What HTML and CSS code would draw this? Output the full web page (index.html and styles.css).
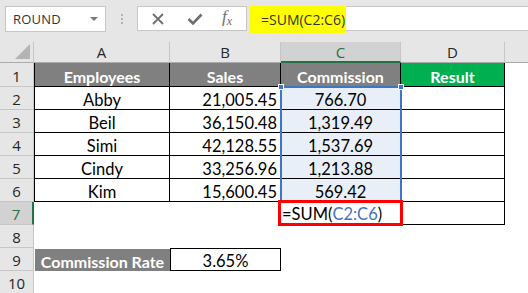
FILE: index.html
```html
<!DOCTYPE html>
<html>
<head>
<meta charset="utf-8">
<link rel="stylesheet" href="styles.css">
</head>
<body>
<div class="app">
  <div class="toolbar">
    <div class="namebox">
      <span class="name">ROUND</span>
      <span class="caret"></span>
    </div>
    <div class="grip"><i></i><i></i><i></i></div>
    <div class="fxbox">
      <svg class="ico" width="14" height="14" viewBox="0 0 14 14"><path d="M2 2 L12 12 M12 2 L2 12" stroke="#6e6e6e" stroke-width="1.8" fill="none"/></svg>
      <svg class="ico" width="16" height="14" viewBox="0 0 16 14"><path d="M1.5 7 L6 11.5 L14.5 2.5" stroke="#6e6e6e" stroke-width="2.6" fill="none"/></svg>
      <span class="fx">f<sub>x</sub></span>
    </div>
    <div class="formula">
      <span class="hl">=SUM(C2:C6)</span>
    </div>
  </div>
  <div class="sheet">
    <div class="corner"><span class="tri"></span></div>
    <div class="ch">A</div>
    <div class="ch">B</div>
    <div class="ch sel">C</div>
    <div class="ch">D</div>
    <div class="ch last"></div>

    <div class="rh">1</div>
    <div class="c hd bl">Employees</div>
    <div class="c hd">Sales</div>
    <div class="c hd">Commission</div>
    <div class="c hd green">Result</div>
    <div class="c"></div>

    <div class="rh">2</div>
    <div class="c t bl">Abby</div>
    <div class="c t r">21,005.45</div>
    <div class="c t blue">766.70</div>
    <div class="c t"></div>
    <div class="c"></div>

    <div class="rh">3</div>
    <div class="c t bl">Beil</div>
    <div class="c t r">36,150.48</div>
    <div class="c t blue">1,319.49</div>
    <div class="c t"></div>
    <div class="c"></div>

    <div class="rh">4</div>
    <div class="c t bl">Simi</div>
    <div class="c t r">42,128.55</div>
    <div class="c t blue">1,537.69</div>
    <div class="c t"></div>
    <div class="c"></div>

    <div class="rh">5</div>
    <div class="c t bl">Cindy</div>
    <div class="c t r">33,256.96</div>
    <div class="c t blue">1,213.88</div>
    <div class="c t"></div>
    <div class="c"></div>

    <div class="rh">6</div>
    <div class="c t bl">Kim</div>
    <div class="c t r">15,600.45</div>
    <div class="c t blue">569.42</div>
    <div class="c t"></div>
    <div class="c"></div>

    <div class="rh act">7</div>
    <div class="c"></div>
    <div class="c"></div>
    <div class="c"></div>
    <div class="c t"></div>
    <div class="c"></div>

    <div class="rh">8</div>
    <div class="c"></div>
    <div class="c"></div>
    <div class="c"></div>
    <div class="c"></div>
    <div class="c"></div>

    <div class="rh">9</div>
    <div class="c rate">Commission Rate</div>
    <div class="c box">3.65%</div>
    <div class="c"></div>
    <div class="c"></div>
    <div class="c"></div>

    <div class="rh">10</div>
    <div class="c"></div>
    <div class="c"></div>
    <div class="c"></div>
    <div class="c"></div>
    <div class="c"></div>

    <div class="selection">
      <span class="handle hl-l"></span>
      <span class="handle hl-r"></span>
    </div>
    <div class="editing">=SUM(<span class="ref">C2:C6</span>)</div>
  </div>
</div>
</body>
</html>
```

FILE: styles.css
```css
* { box-sizing: border-box; }
html, body { margin: 0; padding: 0; }
body {
  width: 528px;
  height: 293px;
  overflow: hidden;
  background: #e6e6e6;
  font-family: "Open Sans", "Noto Sans", sans-serif;
}
.app { width: 528px; height: 293px; overflow: hidden; }

.toolbar {
  height: 42px;
  display: flex;
  align-items: flex-start;
  padding-top: 6px;
  padding-left: 5px;
  background: #e6e6e6;
}
.namebox {
  width: 101px;
  height: 26px;
  background: #fff;
  border: 1px solid #c6c6c6;
  display: flex;
  align-items: center;
  padding-left: 7px;
  position: relative;
}
.name {
  font-size: 13px;
  color: #333;
  letter-spacing: 0.2px;
}
.caret {
  position: absolute;
  right: 7px;
  top: 10px;
  width: 0; height: 0;
  border-left: 4px solid transparent;
  border-right: 4px solid transparent;
  border-top: 4px solid #7a7a7a;
}
.grip {
  width: 31px;
  height: 26px;
  display: flex;
  flex-direction: column;
  align-items: center;
  justify-content: center;
  gap: 2px;
}
.grip i {
  display: block;
  width: 2px; height: 2px;
  background: #b4b4b4;
}
.fxbox {
  width: 110px;
  height: 25px;
  background: #fff;
  border: 1px solid #c6c6c6;
  display: flex;
  align-items: center;
  padding-left: 13px;
}
.ico { display: block; }
.fxbox .ico:first-child { margin-right: 22px; }
.fxbox .ico:nth-child(2) { margin-right: 19px; }
.fx {
  font-family: "Liberation Serif", serif;
  font-style: italic;
  font-size: 17px;
  color: #6e6e6e;
  line-height: 1;
  margin-top: -3px;
}
.fx sub { font-size: 12px; vertical-align: -3px; }
.formula {
  margin-left: 3px;
  flex: 1;
  height: 25px;
  background: #fff;
  border: 1px solid #c6c6c6;
  border-right: none;
  position: relative;
}
.hl {
  position: absolute;
  left: -1px;
  top: -1px;
  width: 96px;
  height: 27px;
  background: #ffff00;
  font-size: 14px;
  color: #333;
  padding-left: 11px;
  display: flex;
  align-items: center;
}

.sheet {
  position: relative;
  display: grid;
  grid-template-columns: 34px 136px 111px 120px 104px 1fr;
  grid-template-rows: 21px 24px repeat(9, 23px);
  background: #fff;
}
.corner {
  background: #e6e6e6;
  border-right: 1px solid #c6c6c6;
  border-bottom: 1px solid #ababab;
  position: relative;
}
.tri {
  position: absolute;
  right: 3px;
  bottom: 3px;
  width: 0; height: 0;
  border-left: 15px solid transparent;
  border-bottom: 15px solid #b4b4b4;
}
.ch {
  background: #e6e6e6;
  border-right: 1px solid #c6c6c6;
  border-bottom: 1px solid #ababab;
  display: flex;
  align-items: center;
  justify-content: center;
  font-size: 15px;
  color: #262626;
}
.ch.sel {
  background: #d2d2d2;
  color: #217346;
  border-bottom: 2px solid #217346;
}
.ch.last { border-right: none; }
.rh {
  background: #e6e6e6;
  border-right: 1px solid #c6c6c6;
  border-bottom: 1px solid #c6c6c6;
  display: flex;
  align-items: center;
  justify-content: center;
  font-size: 15px;
  color: #262626;
  padding-top: 2px;
}
.rh.act {
  background: #d2d2d2;
  color: #217346;
  border-right: 2px solid #217346;
}
.c {
  font-family: "Lato", sans-serif;
  font-size: 16.5px;
  color: #000;
  display: flex;
  align-items: center;
  justify-content: center;
  padding-top: 3px;
}
.c.t {
  border-right: 1px solid #000;
  border-bottom: 1px solid #000;
}
.c.bl { border-left: 1px solid #000; }
.c.r { justify-content: flex-end; padding-right: 3px; }
.c.hd {
  background: #808080;
  color: #fff;
  font-weight: bold;
  font-size: 16px;
  border-right: 1px solid #000;
  border-bottom: 1px solid #000;
}
.c.hd.green { background: #00b050; }
.c.blue { background: #e9eff8; }
.c.rate {
  background: #808080;
  color: #fff;
  font-weight: bold;
  font-size: 16px;
  margin: 1px 0 0 1px;
}
.c.box {
  border: 1px solid #000;
}

.selection {
  position: absolute;
  left: 280px;
  top: 44px;
  width: 122px;
  height: 116px;
  border: 2px solid #3f75c9;
  border-bottom: none;
  pointer-events: none;
}
.handle {
  position: absolute;
  top: -4px;
  width: 6px;
  height: 6px;
  background: #3f75c9;
  border: 1px solid #fff;
}
.hl-l { left: -4px; }
.hl-r { right: -4px; }
.editing {
  position: absolute;
  left: 278px;
  top: 158px;
  width: 125px;
  height: 26px;
  border: 3px solid #ff0000;
  background: #fff;
  font-family: "Lato", sans-serif;
  font-size: 16.5px;
  color: #000;
  display: flex;
  align-items: center;
  padding-left: 1px;
  padding-top: 2px;
}
.ref { color: #4472c4; }
```
